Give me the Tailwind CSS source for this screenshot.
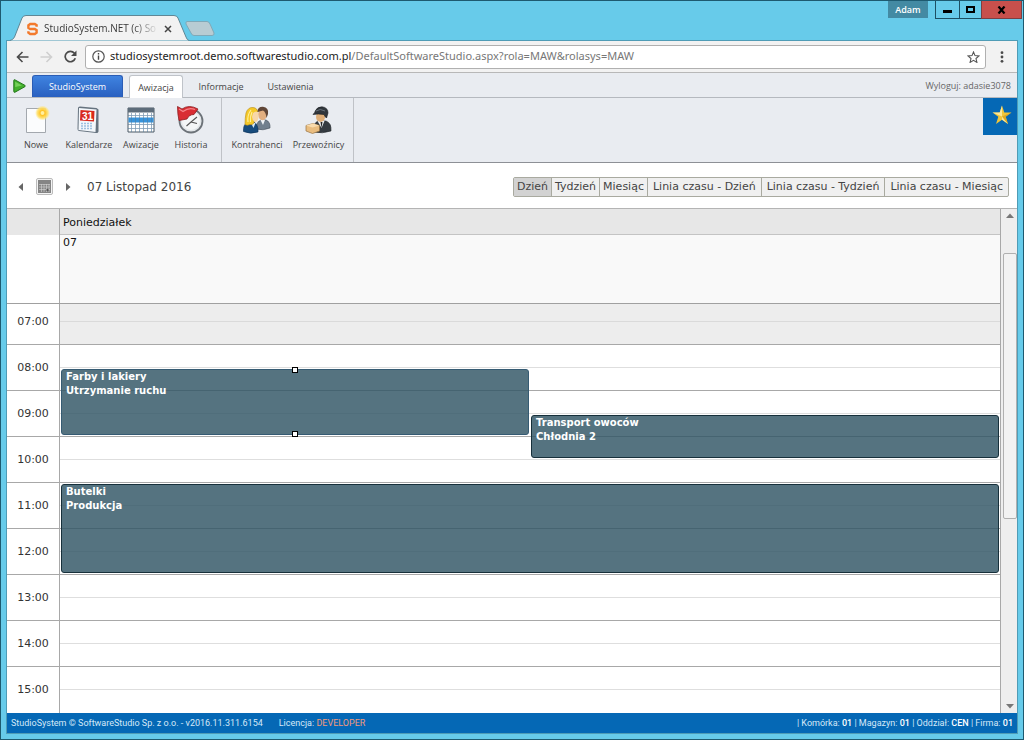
<!DOCTYPE html>
<html lang="pl">
<head>
<meta charset="utf-8">
<title>StudioSystem.NET</title>
<script src="https://cdn.jsdelivr.net/npm/@tailwindcss/browser@4"></script>
</head>
<body class="flex h-screen flex-col overflow-hidden border border-[#1d5a70] bg-[#67cbea] px-[5px] pb-[5px] font-['Open_Sans','Noto_Sans',sans-serif] text-[9px] text-[#444]">

<!-- window title bar -->
<header class="flex h-[39px] shrink-0 items-start justify-between">
  <div class="flex self-end">
    <div class="relative z-10 ml-1 -mb-px h-[26px] w-[179px]">
      <svg class="absolute inset-0" width="179" height="26" viewBox="0 0 179 26" aria-hidden="true">
        <path d="M0 25.5 Q3 25 4.500 22 L12 3 Q13 .5 16 .5 H164 Q167 .5 168 3 L176 22 Q177 25 179 25.500" fill="#f2f2f2" stroke="#5f8796"/>
      </svg>
      <div class="relative flex h-full items-center pl-[17px] pr-[17px] pt-px">
        <svg class="shrink-0" width="11" height="14" viewBox="0 0 12 14" aria-hidden="true">
          <path d="M10.500 4.500V2.800L8.500 1.500H3.500L1.500 3v2.800L3.500 7H8.500l2 1.300V11l-2 1.500H3.500L1.500 11V9.500" fill="none" stroke="#f37a2c" stroke-width="2.600"/>
        </svg>
        <span class="ml-[6px] whitespace-nowrap bg-linear-to-r from-[#333] from-80% to-[#333]/10 bg-clip-text text-[10px] text-transparent">StudioSystem.NET (c) So</span>
        <button class="ml-auto flex" aria-label="Zamknij kartę">
          <svg width="8" height="8" viewBox="0 0 8 8"><path d="M1 1l6 6M7 1L1 7" stroke="#444" stroke-width="1.500"/></svg>
        </button>
      </div>
    </div>
    <button class="-ml-1 mb-1 flex self-end" aria-label="Nowa karta">
      <svg width="30" height="15" viewBox="0 0 30 15"><path d="M2 .5H22Q24 .5 25 3L29 12Q29.500 14.500 27 14.500H9Q7 14.500 6 12L1 3Q.5 .5 2 .5Z" fill="#b8ccd3" stroke="#7fa9b8"/></svg>
    </button>
  </div>
  <div class="-mr-1 flex">
    <button class="mr-[7px] h-[17px] w-[40px] bg-[#438aa3] text-[9px] font-semibold leading-[16px] text-white">Adam</button>
    <button class="flex h-[18px] w-[25px] items-center justify-center border border-t-0 border-[#1d4f63]" aria-label="Minimalizuj"><span class="mt-1 h-[3px] w-[9px] bg-black"></span></button>
    <button class="flex h-[18px] w-[21px] items-center justify-center border-b border-[#1d4f63]" aria-label="Maksymalizuj"><span class="h-[7px] w-[9px] border-2 border-black"></span></button>
    <button class="flex h-[18px] w-[41px] items-center justify-center border border-t-0 border-[#7c3f42] bg-[#c8504c]" aria-label="Zamknij"><svg width="9" height="8" viewBox="0 0 9 8"><path d="M1.500 .5l6 7M7.500 .5l-6 7" stroke="#000" stroke-width="2.200"/></svg></button>
  </div>
</header>

<div class="flex min-h-0 flex-1 flex-col border border-[#4f9cb6] bg-white">
  <!-- address bar -->
  <div class="flex h-[32px] shrink-0 items-center border-b border-[#b8b8b8] bg-[#f2f2f2] pl-[9px] pr-[13px]">
    <button aria-label="Wstecz"><svg width="13" height="12" viewBox="0 0 13 12"><path d="M12.500 6H1.500M6.500 1L1.500 6l5 5" fill="none" stroke="#4a4a4a" stroke-width="1.600"/></svg></button>
    <button class="ml-[11px]" aria-label="Dalej"><svg width="13" height="12" viewBox="0 0 13 12"><path d="M.5 6H11.500M6.500 1l5 5l-5 5" fill="none" stroke="#cfcfcf" stroke-width="1.600"/></svg></button>
    <button class="ml-[11px]" aria-label="Odśwież"><svg width="13" height="13" viewBox="0 0 13 13"><path d="M11.300 8.300A5.200 5.200 0 1 1 10.400 3.200" fill="none" stroke="#4a4a4a" stroke-width="1.700"/><path d="M12.500 .5V6H7z" fill="#4a4a4a"/></svg></button>
    <div class="ml-[8px] flex h-[24px] flex-1 items-center rounded-[3px] border border-[#b0b0b0] bg-white pl-[6px] pr-[5px]">
      <svg width="13" height="13" viewBox="0 0 13 13" aria-hidden="true"><circle cx="6.500" cy="6.500" r="5.700" fill="none" stroke="#555" stroke-width="1.200"/><path d="M6.500 5.500v4.200M6.500 3v1.500" stroke="#444" stroke-width="1.400"/></svg>
      <div role="textbox" aria-label="Adres" contenteditable="true" class="ml-[5px] flex-1 whitespace-nowrap font-['Noto_Sans',sans-serif] text-[11px] text-[#777]"><span class="text-[#222]">studiosystemroot.demo.softwarestudio.com.pl</span>/DefaultSoftwareStudio.aspx?rola=MAW&amp;rolasys=MAW</div>
      <button aria-label="Dodaj zakładkę"><svg width="13" height="12" viewBox="0 0 13 12"><path d="M6.500 1l1.500 3.600 4 .3-3 2.600.9 3.900-3.400-2.100-3.400 2.100.9-3.900-3-2.600 4-.3z" fill="none" stroke="#555" stroke-width="1.100"/></svg></button>
    </div>
    <button class="ml-[14px]" aria-label="Menu"><svg width="4" height="12" viewBox="0 0 4 12" fill="#4a4a4a"><circle cx="2" cy="1.700" r="1.400"/><circle cx="2" cy="6" r="1.400"/><circle cx="2" cy="10.300" r="1.400"/></svg></button>
  </div>

  <!-- ribbon tabs -->
  <nav class="flex h-[25px] shrink-0 items-end border-b border-[#b5b9bf] bg-[#e9ecf1]">
    <svg class="ml-[6px] mb-[4px]" width="13" height="14" viewBox="0 0 13 14" aria-hidden="true"><path d="M.8 1.500Q.8 .3 2 .9L12 6.400Q12.800 7 12 7.600L2 13.200Q.8 13.600 .8 12.500Z" fill="#42b02c" stroke="#23751b"/><path d="M2.200 2.700L9 6.500L2.200 8z" fill="#8ce06e" opacity=".7"/></svg>
    <button class="ml-[6px] h-[22px] w-[91px] rounded-t-[3px] border border-b-0 border-[#2a5cb5] bg-linear-to-b from-[#3f83e0] to-[#2a60c0] pt-px text-white">StudioSystem</button>
    <button class="-mb-px ml-[6px] h-[23px] w-[54px] rounded-t-[3px] border border-b-0 border-[#bfc3c9] bg-white pt-px">Awizacja</button>
    <button class="h-[21px] w-[76px] pt-px">Informacje</button>
    <button class="h-[21px] w-[63px] pt-px">Ustawienia</button>
    <a href="#" class="mb-[5px] ml-auto mr-[6px] text-[#666]">Wyloguj: adasie3078</a>
  </nav>

  <!-- ribbon -->
  <div class="flex h-[65px] shrink-0 items-start border-b border-[#8d9096] bg-[#e9ecf1]">
    <div class="flex h-full border-r border-[#bfc2c7] pl-[4px] pt-[7px]">
      <button class="flex w-[50px] flex-col items-center gap-[3px]">
        <svg width="30" height="30" viewBox="0 0 30 30"><defs><radialGradient id="sun"><stop offset="0" stop-color="#f59d0c"/><stop offset=".35" stop-color="#ffc62a"/><stop offset=".7" stop-color="#ffe06a" stop-opacity=".9"/><stop offset="1" stop-color="#ffe680" stop-opacity="0"/></radialGradient></defs><path d="M5.500 3.500h19v24h-19z" fill="#fbfcfd" stroke="#a3a8ae"/><circle cx="21.500" cy="8" r="7.500" fill="url(#sun)"/><circle cx="21.500" cy="8" r="2" fill="#fff0a0"/></svg>
        <span>Nowe</span>
      </button>
      <button class="flex w-[56px] flex-col items-center gap-[3px]">
        <svg width="30" height="30" viewBox="0 0 30 30"><path d="M4 3Q4 1.500 6 1.500L22.500 3L24.500 4.500V26.500Q24 28.500 22 28L5 26Q3.500 25.500 3.500 24z" fill="#66737f"/><path d="M5 3L22.500 4.500L21.500 27L4.500 25z" fill="#f3f7fb"/><path d="M6.500 5L20.500 6L20 16.500L6 15.500z" fill="#d9291c"/><text x="8" y="14.500" font-family="Liberation Sans, sans-serif" font-weight="bold" font-size="10" fill="#fff">31</text><path d="M7 18.500h12M7 21h12M7 23.500h12" stroke="#9dc0e0" stroke-width="1.500" stroke-dasharray="2 1"/></svg>
        <span>Kalendarze</span>
      </button>
      <button class="flex w-[48px] flex-col items-center gap-[3px]">
        <svg width="30" height="30" viewBox="0 0 30 30"><path d="M2 3h26v24H2z" fill="#fff" stroke="#4a5865"/><path d="M2 3h26v4.500H2z" fill="#5d6c7a"/><path d="M2.500 12.500h25v5h-25z" fill="#3794dc"/><path d="M5.500 8v19M9.500 8v19M13.500 8v19M17.500 8v19M21.500 8v19M25.500 8v19M2 10.500h26M2 19.500h26M2 23.500h26" stroke="#557c9d" stroke-width=".8" opacity=".75"/></svg>
        <span>Awizacje</span>
      </button>
      <button class="flex w-[52px] flex-col items-center gap-[3px]">
        <svg width="30" height="30" viewBox="0 0 30 30"><circle cx="15" cy="16" r="11.500" fill="#e3e7ea" stroke="#6c7278" stroke-width="1.800"/><circle cx="15" cy="16" r="9" fill="#f4f6f7"/><path d="M1.500 1.500L6 4Q13-1 22 4L18 9.500Q13 9.500 11 14L3 15.500Q1.500 9 1.500 1.500Z" fill="#d92d33" stroke="#8c1d20" stroke-width=".8"/><path d="M3 4L7 6.500Q13 2 19 4.500" fill="none" stroke="#f5858a" stroke-width="1.300"/><path d="M15 17l6-5M15 17l6 1.500M15 17l-4.500 4" stroke="#555" stroke-width="1.100"/></svg>
        <span>Historia</span>
      </button>
      <div class="w-[4px]"></div>
    </div>
    <div class="flex h-full border-r border-[#bfc2c7] pl-[4px] pr-[4px] pt-[7px]">
      <button class="flex w-[62px] flex-col items-center gap-[3px]">
        <svg width="30" height="30" viewBox="0 0 30 30"><path d="M14 24Q14 17 19 15H24Q28.500 17 28 23Q21 26 14 24Z" fill="#71808e" stroke="#3f4c57" stroke-width=".6"/><path d="M18.500 15l2.500 5 2-5z" fill="#f1f4f6"/><ellipse cx="20.500" cy="9.500" rx="4.300" ry="5.800" fill="#e2af80"/><path d="M15 7Q16 1.500 21 1.800Q27 2.500 26 9L24.500 13Q24 7 21 5.500Q18 6 16 7Z" fill="#604637"/><path d="M1.500 26.500Q1 19.500 5 18L12 17Q16.500 20 16 27Q8 29.500 1.500 26.500Z" fill="#174c7d" stroke="#0e3155" stroke-width=".6"/><path d="M9 18l2.500 5 2-5z" fill="#d9eaf5"/><path d="M3 19.500Q3 13 4 8Q6 2 11 2.500Q15.500 3 15.500 7L13 8L12 18Q10 20.500 8 19.500Q5 21 3 19.500Z" fill="#f5c929" stroke="#b78b15" stroke-width=".6"/><path d="M11 8Q15 5 16 8L16.500 12Q16 17 13 17Q10 15 10 12Z" fill="#f8d7a8"/><path d="M6 17Q5 10 9 5M8.500 17Q8 11 10 7" fill="none" stroke="#fff09a" stroke-width="1.200"/></svg>
        <span>Kontrahenci</span>
      </button>
      <button class="flex w-[61px] flex-col items-center gap-[3px]">
        <svg width="30" height="30" viewBox="0 0 30 30"><path d="M10 27Q9 18 14 16H22Q27.500 18 27 26Q18 29 10 27Z" fill="#353b41" stroke="#1d2125" stroke-width=".6"/><path d="M13.500 16l4 7 3-7z" fill="#eef1f3"/><path d="M16.500 17l1 6 1-6z" fill="#222"/><ellipse cx="16.500" cy="12" rx="4.500" ry="5" fill="#dfae78"/><path d="M9 9.500Q11 7.500 11.500 5.500Q13 2 18 1.800Q24 2.500 24 8L22.500 13Q21 12 20 9.500Q14 8.500 9 9.500Z" fill="#30363c" stroke="#15191c" stroke-width=".6"/><path d="M12 6Q16 3 21 6" fill="none" stroke="#68717a"/><path d="M2 20.500L9 18.500L15.500 20.500V26L8.500 28.500L2 26Z" fill="#e9bd80" stroke="#9a7442" stroke-width=".7"/><path d="M2 20.500l6.500 2L15.500 20.500L9 18.500Z" fill="#f9dcae"/></svg>
        <span>Przewoźnicy</span>
      </button>
    </div>
    <button class="ml-auto flex h-[37px] w-[34px] items-center justify-center bg-[#0568b5] pb-[4px] pl-[3px]" aria-label="Ulubione">
      <svg width="20" height="20" viewBox="0 0 20 20"><path d="M10 .5l2.300 7H19.500l-5.800 4.300 2.300 7.200L10 14.700 4 19l2.300-7.200L.5 7.500h7.200z" fill="#f0c53a"/><path d="M10 .5v11L.5 7.500h7.200zM10 11.500l6 7.500-6-4.300z" fill="#fff0b0" opacity=".8"/><path d="M10 11.500l9.500-4-5.800 4.300 2.300 7.200z" fill="#cf9617" opacity=".6"/></svg>
    </button>
  </div>

  <!-- calendar -->
  <main class="flex min-h-0 flex-1 flex-col font-['DejaVu_Sans',sans-serif] text-[11px] text-[#333]">
    <div class="flex h-[45px] shrink-0 items-center justify-between pl-[11px] pr-[8px] pt-[2px]">
      <div class="flex items-center">
        <button aria-label="Poprzedni"><svg width="5" height="8" viewBox="0 0 5 8"><path d="M5 0v8L.5 4z" fill="#666"/></svg></button>
        <button class="ml-[13px] flex h-[17px] w-[17px] items-center justify-center rounded-[2px] border border-[#bbb] bg-[#f3f3f3]" aria-label="Wybierz datę"><svg class="shrink-0" width="13" height="13" viewBox="0 0 13 13"><path d="M0 0h13v13H0z" fill="#858585"/><path d="M1 4.500h11M1 7h11M1 9.500h11M3.500 4v8M6 4v8M8.500 4v8M11 4v8" stroke="#d5d5d5" stroke-width=".6"/><path d="M8.500 9h2v2h-2z" fill="#555"/></svg></button>
        <button class="ml-[13px]" aria-label="Następny"><svg width="5" height="8" viewBox="0 0 5 8"><path d="M0 0v8l4.500-4z" fill="#666"/></svg></button>
        <h1 class="ml-[16px] text-[12px] text-[#444]">07 Listopad 2016</h1>
      </div>
      <div class="flex h-[20px] divide-x divide-[#a9aaa0] rounded-[2px] border border-[#a9aaa0] bg-[#f0f0f0] text-[#444]">
        <button class="bg-[#d2d2d2] px-[3px] pt-px">Dzień</button>
        <button class="px-[3px] pt-px">Tydzień</button>
        <button class="px-[3px] pt-px">Miesiąc</button>
        <button class="px-[5px] pt-px">Linia czasu - Dzień</button>
        <button class="px-[5px] pt-px">Linia czasu - Tydzień</button>
        <button class="px-[5px] pt-px">Linia czasu - Miesiąc</button>
      </div>
    </div>

    <div class="flex min-h-0 flex-1 border-t border-[#b4b4b4]">
      <div class="flex min-w-0 flex-1 flex-col overflow-hidden border-r border-[#a8a8a8]">
        <div class="flex h-[26px] shrink-0 bg-[#e7e7e7]">
          <div class="w-[53px] border-r border-[#a8a8a8]"></div>
          <div class="flex-1 border-b border-[#c4c4c4] pl-[3px] leading-[28px] text-[#111]">Poniedziałek</div>
        </div>
        <div class="flex h-[69px] shrink-0 border-b border-[#a0a0a0]">
          <div class="w-[53px] border-r border-[#a8a8a8]"></div>
          <div class="flex-1 bg-[#f9f9f9] pl-[3px] leading-[16px] text-[#111]">07</div>
        </div>
        <div class="flex">
          <div class="w-[53px] shrink-0 divide-y divide-[#a8a8a8] border-r border-[#a8a8a8] text-center">
            <div class="h-[41px] leading-[36px]">07:00</div>
            <div class="h-[46px] leading-[46px]">08:00</div>
            <div class="h-[46px] leading-[46px]">09:00</div>
            <div class="h-[46px] leading-[46px]">10:00</div>
            <div class="h-[46px] leading-[46px]">11:00</div>
            <div class="h-[46px] leading-[46px]">12:00</div>
            <div class="h-[46px] leading-[46px]">13:00</div>
            <div class="h-[46px] leading-[46px]">14:00</div>
            <div class="h-[46px] leading-[46px]">15:00</div>
          </div>
          <div class="relative flex-1">
            <div class="h-[41px] border-b border-[#a8a8a8] bg-[#ededed]"><div class="h-[18px] border-b border-[#dadada]"></div></div>
            <div class="h-[46px] border-b border-[#a8a8a8]"><div class="h-[23px] border-b border-[#dedede]"></div></div>
            <div class="h-[46px] border-b border-[#a8a8a8]"><div class="h-[23px] border-b border-[#dedede]"></div></div>
            <div class="h-[46px] border-b border-[#a8a8a8]"><div class="h-[23px] border-b border-[#dedede]"></div></div>
            <div class="h-[46px] border-b border-[#a8a8a8]"><div class="h-[23px] border-b border-[#dedede]"></div></div>
            <div class="h-[46px] border-b border-[#a8a8a8]"><div class="h-[23px] border-b border-[#dedede]"></div></div>
            <div class="h-[46px] border-b border-[#a8a8a8]"><div class="h-[23px] border-b border-[#dedede]"></div></div>
            <div class="h-[46px] border-b border-[#a8a8a8]"><div class="h-[23px] border-b border-[#dedede]"></div></div>
            <div class="h-[46px]"><div class="h-[23px] border-b border-[#dedede]"></div></div>

            <!-- appointments, placed by time -->
            <article class="absolute left-0 right-1/2 top-[65px] mx-px h-[66px] rounded-[3px] border border-[#365b73] bg-[#325766]/83 px-[4px] text-[10px] font-bold leading-[14px] text-white">
              <p>Farby i lakiery</p><p>Utrzymanie ruchu</p>
              <span class="absolute -top-[3px] left-1/2 size-[6px] -translate-x-1/2 border border-black bg-white"></span>
              <span class="absolute -bottom-[3px] left-1/2 size-[6px] -translate-x-1/2 border border-black bg-white"></span>
            </article>
            <article class="absolute left-1/2 right-0 top-[111px] mx-px h-[43px] rounded-[3px] border border-[#17303b] bg-[#325766]/83 px-[4px] text-[10px] font-bold leading-[14px] text-white">
              <p>Transport owoców</p><p>Chłodnia 2</p>
            </article>
            <article class="absolute inset-x-0 top-[180px] mx-px h-[89px] rounded-[3px] border border-[#17303b] bg-[#325766]/83 px-[4px] text-[10px] font-bold leading-[14px] text-white">
              <p>Butelki</p><p>Produkcja</p>
            </article>
          </div>
        </div>
      </div>
      <!-- scrollbar -->
      <div class="flex w-[16px] shrink-0 flex-col items-center bg-[#eee] py-[4px] pl-[2px]">
        <svg class="shrink-0" width="8" height="5" viewBox="0 0 8 5" aria-hidden="true"><path d="M0 5L4 .5 8 5z" fill="#777"/></svg>
        <div class="mt-[35px] h-[266px] w-[14px] shrink-0 rounded-[2px] border border-[#b0b0b0] bg-[#f2f2f2]"></div>
        <svg class="mt-auto shrink-0" width="8" height="5" viewBox="0 0 8 5" aria-hidden="true"><path d="M0 0L4 4.500 8 0z" fill="#777"/></svg>
      </div>
    </div>
  </main>

  <footer class="flex h-[20px] shrink-0 items-center bg-[#0568b5] px-[4px] pt-[2px] font-[Roboto,sans-serif] text-[#d5e9f8]">
    <span>StudioSystem © SoftwareStudio Sp. z o.o. - v2016.11.311.6154</span>
    <span class="ml-[16px]">Licencja: <span class="text-[#f29a7c]">DEVELOPER</span></span>
    <span class="ml-auto">| Komórka: <b class="font-medium text-white">01</b> | Magazyn: <b class="font-medium text-white">01</b> | Oddział: <b class="font-medium text-white">CEN</b> | Firma: <b class="font-medium text-white">01</b></span>
  </footer>
</div>
</body>
</html>
